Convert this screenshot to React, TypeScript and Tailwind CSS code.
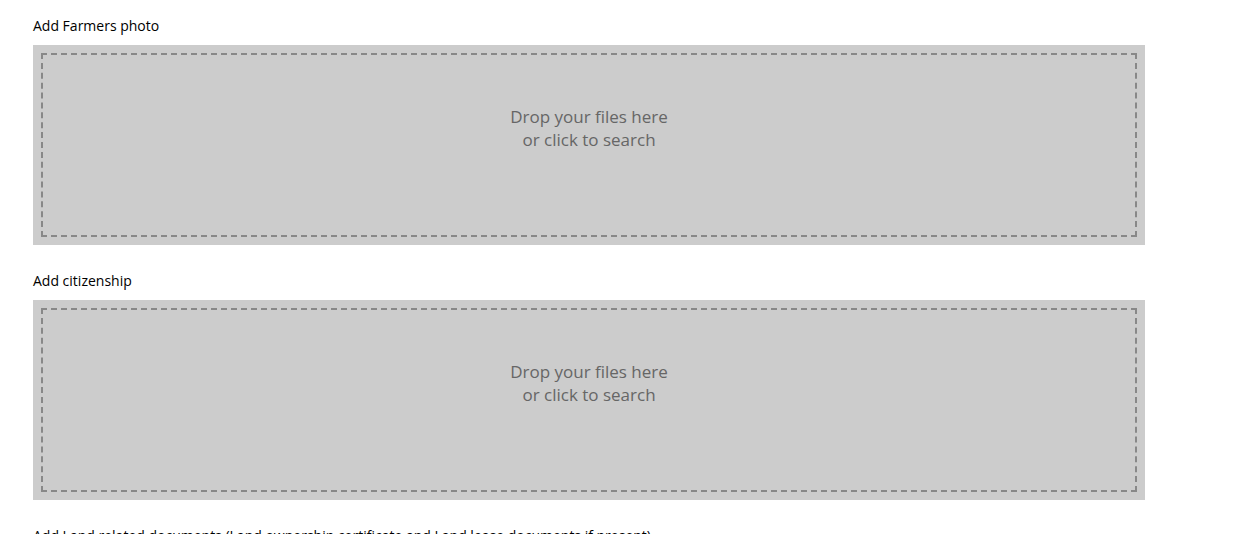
const sections = [
  "Add Farmers photo",
  "Add citizenship",
  "Add Land related documents (Land ownership certificate and Land lease documents if present)",
];

function DropZone() {
  return (
    <div className="h-[200px] w-[1112px] bg-[#cccccc] p-[8px]">
      <div className="flex h-full w-full cursor-pointer flex-col items-center border-2 border-dashed border-[#888888] pt-[50px] text-center text-[17px] leading-[23px] text-[#666666]">
        <span>Drop your files here</span>
        <span>or click to search</span>
      </div>
    </div>
  );
}

export default function App() {
  return (
    <div
      className="min-h-screen bg-white px-[33px] pt-[15px] text-black"
      style={{ fontFamily: '"Open Sans", sans-serif' }}
    >
      {sections.map((label) => (
        <div key={label} className="mb-[25px]">
          <div className="mb-[8px] text-[14px] leading-[22px]">{label}</div>
          <DropZone />
        </div>
      ))}
    </div>
  );
}
